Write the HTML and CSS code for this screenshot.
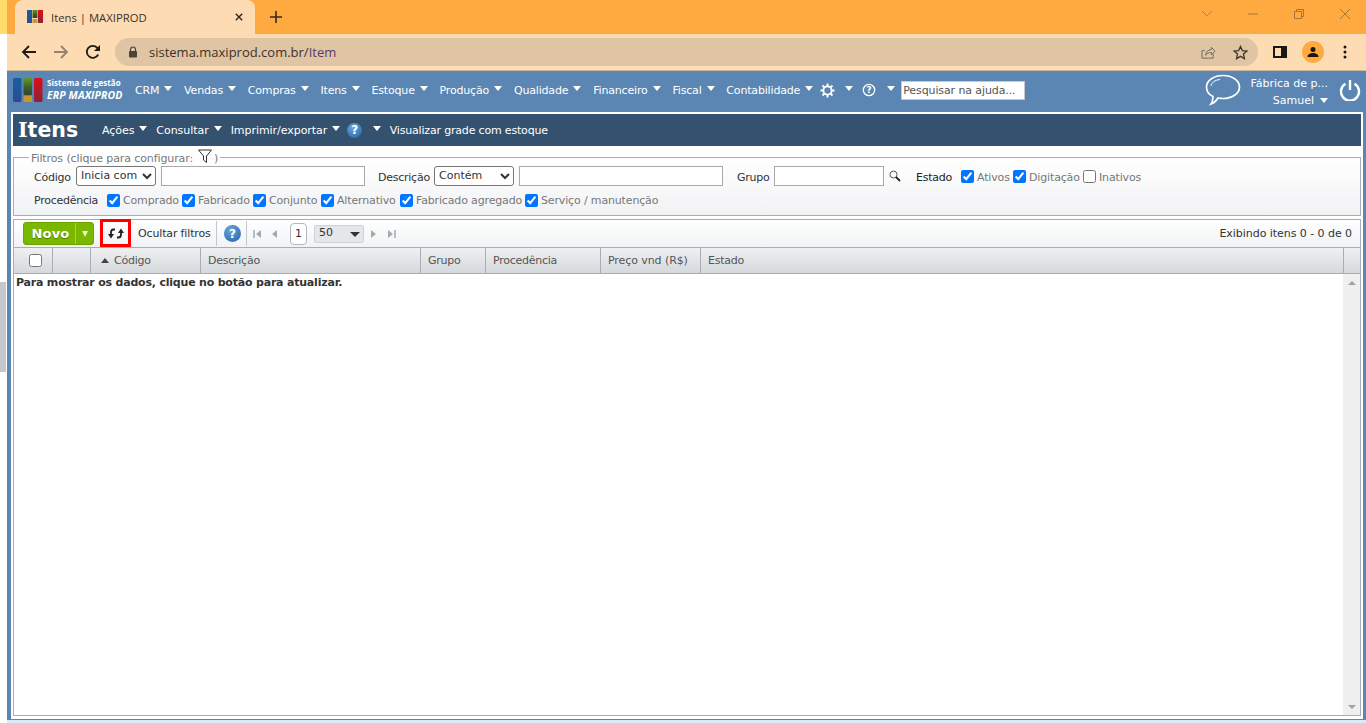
FILE: index.html
```html
<!DOCTYPE html>
<html lang="pt-BR">
<head>
<meta charset="utf-8">
<title>Itens | MAXIPROD</title>
<link rel="stylesheet" href="styles.css">
</head>
<body>
<svg class="defs" width="0" height="0" aria-hidden="true">
  <defs>
    <linearGradient id="gb" x1="0" y1="0" x2="0" y2="1"><stop offset="0" stop-color="#17609a"/><stop offset="1" stop-color="#2c4a98"/></linearGradient>
    <linearGradient id="gg" x1="0" y1="0" x2="0" y2="1"><stop offset="0" stop-color="#5f9a22"/><stop offset=".6" stop-color="#3c5a2a"/><stop offset="1" stop-color="#2f4a2c"/></linearGradient>
    <linearGradient id="gr" x1="0" y1="0" x2="0" y2="1"><stop offset="0" stop-color="#e00d16"/><stop offset="1" stop-color="#8a2438"/></linearGradient>
  </defs>
</svg>
<div class="desk">
  <aside class="gutter"><div class="gutter-top"></div><div class="gutter-bar"></div></aside>
  <div class="browser">
    <div class="tabstrip">
      <div class="tab">
        <svg class="favicon" viewBox="0 0 16 16"><rect x="0" y="1" width="5" height="13" fill="url(#gb)"/><rect x="5.500" y="1" width="5" height="8" fill="url(#gg)"/><rect x="5.500" y="10" width="5" height="4" fill="#c49a3a"/><rect x="11" y="1" width="5" height="13" fill="url(#gr)"/></svg>
        <span class="tab-title">Itens | MAXIPROD</span>
        <svg class="tab-close" viewBox="0 0 10 10"><path d="M1 1l8 8M9 1l-8 8" stroke="#2a2520" stroke-width="1.700" fill="none"/></svg>
      </div>
      <svg class="newtab" viewBox="0 0 12 12"><path d="M6 0v12M0 6h12" stroke="#33291d" stroke-width="1.600"/></svg>
      <div class="winctl">
        <svg class="wc wc-chev" viewBox="0 0 12 8"><path d="M1 1l5 5 5-5" stroke="#b9803c" fill="none"/></svg>
        <svg class="wc wc-min" viewBox="0 0 12 8"><path d="M1 4h10" stroke="#a87438"/></svg>
        <svg class="wc wc-max" viewBox="0 0 12 12"><path d="M1.500 3.500h7v7h-7zM3.500 3.500v-2h7v7h-2" stroke="#a87438" fill="none"/></svg>
        <svg class="wc wc-x" viewBox="0 0 12 12"><path d="M1 1l10 10M11 1L1 11" stroke="#a87438" fill="none"/></svg>
      </div>
    </div>
    <div class="toolbar">
      <svg class="nav nav-back" viewBox="0 0 16 16"><path d="M15 8H2M8 2L2 8l6 6" stroke="#1f1a14" stroke-width="1.800" fill="none"/></svg>
      <svg class="nav nav-fwd" viewBox="0 0 16 16"><path d="M1 8h13M8 2l6 6-6 6" stroke="#94836e" stroke-width="1.800" fill="none"/></svg>
      <svg class="nav nav-reload" viewBox="0 0 16 16"><path d="M13.200 10.500A6 6 0 1 1 12.300 3.800L14 5.500" stroke="#1f1a14" stroke-width="1.800" fill="none"/><path d="M15 1v6H9z" fill="#1f1a14"/></svg>
      <div class="omnibox">
        <svg class="lock" viewBox="0 0 10 12"><path d="M2.500 5V3.500a2.500 2.500 0 0 1 5 0V5" stroke="#4b443b" stroke-width="1.200" fill="none"/><rect x="1" y="5" width="8" height="6.500" rx="1" fill="#4b443b"/></svg>
        <span class="url">sistema.maxiprod.com.br/<span class="url-path">Item</span></span>
        <svg class="omni-share" viewBox="0 0 16 16"><path d="M13 9v5H1V6h3" stroke="#6f675c" fill="none"/><path d="M5 11c0-4 3-6 6-6V2.500l4 4-4 4V8c-3 0-5 1-6 3z" stroke="#6f675c" fill="none"/></svg>
        <svg class="omni-star" viewBox="0 0 16 16"><path d="M8 1.500l2 4.500 4.800.5-3.600 3.200 1 4.800L8 12.100l-4.200 2.400 1-4.800L1.200 6.500 6 6z" stroke="#3d372e" stroke-width="1.400" fill="none"/></svg>
      </div>
      <svg class="side" viewBox="0 0 14 12"><path d="M0 0h14v12H0z" fill="#1c1712"/><rect x="2" y="2" width="6" height="8" fill="#fddcb3"/></svg>
      <div class="avatar"><svg viewBox="0 0 12 12"><circle cx="6" cy="3.500" r="2.500" fill="#1c1712"/><path d="M0.500 11c0-3 3-4 5.500-4s5.500 1 5.500 4z" fill="#1c1712"/></svg></div>
      <svg class="dots" viewBox="0 0 4 14"><circle cx="2" cy="2" r="1.500" fill="#1c1712"/><circle cx="2" cy="7" r="1.500" fill="#1c1712"/><circle cx="2" cy="12" r="1.500" fill="#1c1712"/></svg>
    </div>
    <div class="app">
      <header class="appbar">
        <svg class="logo" viewBox="0 0 30 24"><rect x="0" y="0" width="8.500" height="24" rx="1.500" fill="url(#gb)"/><rect x="10.500" y="0" width="8.500" height="17" rx="1.500" fill="url(#gg)"/><rect x="10.500" y="18" width="8.500" height="6" rx="1" fill="#c8962f"/><rect x="21" y="0" width="8.500" height="24" rx="1.500" fill="url(#gr)"/></svg>
        <div class="brand"><span class="brand-top">Sistema de gestão</span><span class="brand-name">ERP MAXIPROD</span></div>
        <nav class="menu">
          <a class="mi">CRM<i class="caret"></i></a>
          <a class="mi">Vendas<i class="caret"></i></a>
          <a class="mi">Compras<i class="caret"></i></a>
          <a class="mi">Itens<i class="caret"></i></a>
          <a class="mi">Estoque<i class="caret"></i></a>
          <a class="mi">Produção<i class="caret"></i></a>
          <a class="mi">Qualidade<i class="caret"></i></a>
          <a class="mi">Financeiro<i class="caret"></i></a>
          <a class="mi">Fiscal<i class="caret"></i></a>
          <a class="mi">Contabilidade<i class="caret"></i></a>
        </nav>
        <svg class="gear" viewBox="0 0 16 16"><circle cx="8" cy="8" r="4.400" stroke="#fff" stroke-width="2" fill="none"/><path d="M8 0.500v3M8 12.500v3M0.500 8h3M12.500 8h3M2.700 2.700l2.200 2.200M11.100 11.100l2.200 2.200M13.300 2.700l-2.200 2.200M4.900 11.100l-2.200 2.200" stroke="#fff" stroke-width="2"/></svg>
        <i class="caret caret-gear"></i>
        <svg class="help-w" viewBox="0 0 16 16"><circle cx="8" cy="8" r="6.500" stroke="#fff" stroke-width="1.500" fill="none"/><text x="8" y="11.500" class="help-w-q">?</text></svg>
        <i class="caret caret-help"></i>
        <input class="helpsearch" type="text" placeholder="Pesquisar na ajuda...">
        <svg class="bubble" viewBox="0 0 36 32"><path d="M18 1.500c9 0 16.500 4.800 16.500 11.500S27 24.500 18 24.500c-2 0-3.500-.2-5-.5-1.500 2.500-4 5-7 6 1.500-2 2-4.500 2-7.500C3.500 20.500 1.500 17 1.500 13 1.500 6.300 9 1.500 18 1.500z" stroke="#fff" stroke-width="1.700" fill="none"/><path d="M6 12c.5-3.500 4-6 9-6.500" stroke="#fff" fill="none"/></svg>
        <div class="company"><span class="company-name">Fábrica de p...</span><span class="company-user">Samuel<i class="caret caret-user"></i></span></div>
        <svg class="power" viewBox="0 0 22 22"><path d="M6.500 4.800a9 9 0 1 0 9 0" stroke="#fff" stroke-width="2.400" fill="none"/><path d="M11 1v10" stroke="#fff" stroke-width="2.400"/></svg>
      </header>
      <main class="panel">
        <div class="titlebar">
          <h1 class="title">Itens</h1>
          <a class="ti">Ações<i class="caret"></i></a>
          <a class="ti">Consultar<i class="caret"></i></a>
          <a class="ti">Imprimir/exportar<i class="caret"></i></a>
          <span class="help-b help-title">?</span>
          <i class="caret caret-title"></i>
          <a class="ti ti-grade">Visualizar grade com estoque</a>
        </div>
        <fieldset class="filters">
          <legend class="legend">Filtros (clique para configurar: <svg class="funnel" viewBox="0 0 14 14"><path d="M0.500 1h13L8.500 7v6.500L5.500 11V7z" stroke="#333" fill="none"/></svg> )</legend>
          <div class="frow frow-1">
            <label class="fl fl-cod">Código</label>
            <select class="sel"><option>Inicia com</option></select>
            <input class="txt txt-cod" type="text">
            <label class="fl fl-desc">Descrição</label>
            <select class="sel"><option>Contém</option></select>
            <input class="txt txt-cod" type="text">
            <label class="fl fl-grp">Grupo</label>
            <input class="txt txt-grp" type="text">
            <svg class="lens" viewBox="0 0 12 12"><circle cx="4.500" cy="4.500" r="3.500" stroke="#555" fill="none"/><path d="M7 7l4 4" stroke="#222" stroke-width="1.800"/></svg>
            <label class="fl fl-est">Estado</label>
            <label class="ck ck-ati"><input type="checkbox" checked>Ativos</label>
            <label class="ck ck-dig"><input type="checkbox" checked>Digitação</label>
            <label class="ck"><input type="checkbox">Inativos</label>
          </div>
          <div class="frow frow-2">
            <label class="fl fl-proc">Procedência</label>
            <label class="ck ck-com"><input type="checkbox" checked>Comprado</label>
            <label class="ck ck-fab"><input type="checkbox" checked>Fabricado</label>
            <label class="ck ck-con"><input type="checkbox" checked>Conjunto</label>
            <label class="ck ck-alt"><input type="checkbox" checked>Alternativo</label>
            <label class="ck ck-agr"><input type="checkbox" checked>Fabricado agregado</label>
            <label class="ck"><input type="checkbox" checked>Serviço / manutenção</label>
          </div>
        </fieldset>
        <section class="grid">
          <div class="gridbar">
            <div class="novo"><span class="novo-t">Novo</span><span class="novo-c"><i class="caret-s"></i></span></div>
            <button class="refresh" type="button"><svg viewBox="0 0 16 13"><path d="M7 2.500H5.500C3.800 2.500 3 3.500 3 5.500V8M9 10.500h1.500c1.700 0 2.500-1 2.500-3V5" stroke="#222" stroke-width="1.800" fill="none"/><path d="M0 7h6l-3 4.500zM10 6h6l-3-4.500z" fill="#222"/></svg></button>
            <span class="ocultar">Ocultar filtros</span>
            <span class="help-b help-bar">?</span>
            <div class="pager">
              <svg class="pg pg-first" viewBox="0 0 8 10"><path d="M1 1v8" stroke="#a3a9b1" stroke-width="1.500"/><path d="M8 1v8L3 5z" fill="#a3a9b1"/></svg>
              <svg class="pg pg-prev" viewBox="0 0 6 10"><path d="M6 1v8L1 5z" fill="#a3a9b1"/></svg>
              <span class="pgnum">1</span>
              <span class="pgsize">50<i class="caret-d"></i></span>
              <svg class="pg pg-next" viewBox="0 0 6 10"><path d="M0 1v8l5-4z" fill="#a3a9b1"/></svg>
              <svg class="pg pg-last" viewBox="0 0 8 10"><path d="M0 1v8l5-4z" fill="#a3a9b1"/><path d="M7 1v8" stroke="#a3a9b1" stroke-width="1.500"/></svg>
            </div>
            <span class="exibindo">Exibindo itens 0 - 0 de 0</span>
          </div>
          <div class="ghead">
            <div class="gh gh-ck"><input type="checkbox"></div>
            <div class="gh gh-blank"></div>
            <div class="gh gh-cod"><i class="sort"></i>Código</div>
            <div class="gh gh-des">Descrição</div>
            <div class="gh gh-grp">Grupo</div>
            <div class="gh gh-pro">Procedência</div>
            <div class="gh gh-pre">Preço vnd (R$)</div>
            <div class="gh gh-est">Estado</div>
            <div class="gh gh-sb"></div>
          </div>
          <div class="gbody">
            <p class="msg">Para mostrar os dados, clique no botão para atualizar.</p>
            <div class="sbar"><i class="sb-up"></i><i class="sb-down"></i></div>
          </div>
        </section>
      </main>
    </div>
    <div class="strip"></div>
  </div>
</div>
</body>
</html>
```
FILE: styles.css
```css
* { box-sizing: border-box; }
html, body { margin: 0; height: 723px; overflow: hidden; background: #fff; }
body { font-family: "DejaVu Sans", Verdana, sans-serif; font-size: 11px; color: #333; }
.defs { display: block; height: 0; }
.desk { display: flex; height: 723px; }
.gutter { width: 7px; flex: none; display: flex; flex-direction: column; }
.gutter-top { height: 34px; background: #ffdc6a; }
.gutter-bar { width: 6px; height: 90px; margin-top: 248px; background: #c4c8cc; }
.browser { flex: 1; display: flex; flex-direction: column; min-width: 0; }
.strip { height: 3px; background: #dbeafa; flex: none; }

.tabstrip { height: 34px; background: #ffaa40; display: flex; align-items: center; padding-left: 8px; flex: none; }
.tab { width: 240px; height: 34px; background: #fddcb3; border-radius: 8px 8px 0 0; display: flex; align-items: center; padding: 0 12px; }
.favicon { width: 16px; height: 16px; flex: none; margin-right: 8px; }
.tab-title { font: 11.300px "Open Sans", sans-serif; color: #3e3226; flex: 1; }
.tab-close { width: 8px; height: 8px; flex: none; }
.newtab { width: 12px; height: 12px; margin-left: 15px; }
.winctl { margin-left: auto; display: flex; align-items: center; height: 30px; margin-top: -6px; }
.wc { width: 12px; flex: none; }
.wc-chev { height: 8px; margin-right: 34px; }
.wc-min { height: 8px; margin-right: 34px; }
.wc-max { height: 12px; margin-right: 34px; }
.wc-x { height: 12px; margin-right: 15px; }

.toolbar { height: 36px; background: #fddcb3; display: flex; align-items: center; padding-left: 14px; flex: none; }
.nav { width: 16px; height: 16px; flex: none; }
.nav-fwd { margin-left: 16px; }
.nav-reload { margin-left: 16px; }
.omnibox { width: 1143px; height: 28px; margin-left: 14px; background: #dfc5a3; border-radius: 14px; display: flex; align-items: center; padding: 0 10px 0 13px; }
.lock { width: 10px; height: 12px; flex: none; }
.url { font: 13px "Open Sans", sans-serif; color: #3e3226; margin-left: 11px; flex: 1; }
.url-path { color: #5c3a66; }
.omni-share { width: 15px; height: 15px; flex: none; margin-right: 17px; }
.omni-star { width: 15px; height: 15px; flex: none; }
.side { width: 14px; height: 12px; flex: none; margin-left: 15px; }
.avatar { width: 22px; height: 22px; border-radius: 50%; background: #ffaa40; margin-left: 15px; display: flex; align-items: center; justify-content: center; flex: none; }
.avatar svg { width: 12px; height: 12px; }
.dots { width: 4px; height: 14px; margin-left: 19px; flex: none; }

.app { flex: 1; background: #5b86b3; padding: 0 3px 1px 4px; border-top: 1px solid #c9b79c; display: flex; flex-direction: column; min-height: 0; }
.appbar { height: 38px; margin-bottom: 3px; padding: 0 2px; display: flex; align-items: center; color: #fff; flex: none; }
.logo { width: 30px; height: 24px; flex: none; }
.brand { display: flex; flex-direction: column; margin-left: 4px; width: 88px; flex: none; }
.brand-top { font: bold 8px/10px "Open Sans", sans-serif; letter-spacing: .1px; }
.brand-name { font: italic bold 10.500px/14px "Open Sans", sans-serif; letter-spacing: .1px; }
.menu { display: flex; align-items: center; gap: 11.800px; letter-spacing: -.17px; flex: none; }
.mi { color: #fff; display: inline-flex; align-items: center; white-space: nowrap; }
.caret { display: inline-block; width: 0; height: 0; border-left: 4.500px solid transparent; border-right: 4.500px solid transparent; border-top: 5px solid #fff; margin-left: 5px; position: relative; top: -2px; flex: none; }
.gear { width: 15px; height: 15px; margin-left: 7px; flex: none; }
.caret-gear { margin-left: 10px; }
.help-w { width: 14px; height: 14px; margin-left: 9px; flex: none; }
.help-w-q { font: bold 10px "DejaVu Sans", sans-serif; fill: #fff; text-anchor: middle; }
.caret-help { margin-left: 11px; }
.helpsearch { width: 124px; height: 19px; margin-left: 6px; border: 1px solid #c9c9c9; padding: 0 1px; font: 11px "DejaVu Sans", sans-serif; letter-spacing: -.1px; flex: none; background: #fff; }
.helpsearch::placeholder { color: #555; opacity: 1; }
.bubble { width: 36px; height: 32px; margin-left: auto; flex: none; }
.company { display: flex; flex-direction: column; align-items: flex-end; width: 78px; margin: 3px 0 0 9px; flex: none; line-height: 17px; }
.caret-user { margin-left: 6px; top: -1px; }
.power { width: 22px; height: 22px; margin-left: 11px; flex: none; }

.panel { flex: 1; background: #fff; border: solid #fff; border-width: 2px 2px 3px; min-height: 0; display: flex; flex-direction: column; }
.titlebar { height: 32px; background: #34526f; color: #fff; display: flex; align-items: center; padding-left: 5px; flex: none; }
.title { font: bold 20.500px "DejaVu Sans", sans-serif; margin: 0; width: 84px; flex: none; }
.title::first-letter { font-family: "DejaVu Serif", serif; }
.ti { color: #fff; display: inline-flex; align-items: center; white-space: nowrap; margin-right: 9px; letter-spacing: -.05px; }
.ti-grade { margin-right: 0; letter-spacing: -.18px; }
.help-b { display: inline-flex; align-items: center; justify-content: center; border-radius: 50%; background: radial-gradient(circle at 40% 30%, #6ea5dc, #1f5fa8); color: #fff; font: bold 12px "DejaVu Sans", sans-serif; flex: none; }
.help-title { width: 15px; height: 15px; margin-left: -2px; }
.caret-title { margin: 0 8.500px 0 11px; }

.filters { margin: 3px 0 0; padding: 0 0 0 20px; height: 67px; border: 1px solid #a8adb3; background: linear-gradient(#fff, #f1f2f4); min-width: 0; flex: none; color: #333; }
.legend { padding: 0 2px; margin-left: -5px; color: #777; line-height: 13px; letter-spacing: -.1px; }
.funnel { width: 14px; height: 14px; vertical-align: -1px; margin: 0 -2px 0 2px; }
.frow { display: flex; align-items: center; white-space: nowrap; }
.frow-1 { height: 20px; margin-top: 1px; }
.frow-2 { height: 18px; margin-top: 5px; }
.fl { color: #333; flex: none; letter-spacing: -.25px; }
.frow-1 .fl { padding-top: 2px; }
.frow-1 .ck { padding-top: 2px; }
.frow-1 .ck input { position: relative; top: -1px; }
.fl-cod { width: 42px; }
.fl-desc { width: 56px; margin-left: 13px; }
.fl-grp { width: 37px; margin-left: 14px; }
.fl-est { width: 45px; margin-left: 15px; color: #222; }
.fl-proc { width: 73px; }
.sel { width: 80px; height: 20px; font: 11px "DejaVu Sans", sans-serif; color: #333; background: #fff; border: 1px solid #767676; border-radius: 3px; padding: 0 0 1px; flex: none; }
.txt { height: 20px; border: 1px solid #a8a8a8; background: #fff; margin: 0 0 0 5px; padding: 0 2px; flex: none; }
.txt-cod { width: 204px; }
.txt-grp { width: 110px; margin-left: 0; }
.lens { width: 12px; height: 12px; margin-left: 5px; flex: none; }
.ck { display: inline-flex; align-items: center; color: #777; flex: none; letter-spacing: -.15px; }
.ck input { margin: 0 3px 0 0; width: 13px; height: 13px; flex: none; }
.ck-ati { width: 52px; }
.ck-dig { width: 70px; }
.ck-com { width: 75px; }
.ck-fab { width: 71px; }
.ck-con { width: 68px; }
.ck-alt { width: 79px; }
.ck-agr { width: 125px; }

.grid { flex: 1; margin-top: 3px; border: 1px solid #a8adb3; display: flex; flex-direction: column; min-height: 0; }
.gridbar { height: 27px; display: flex; align-items: center; background: linear-gradient(#fff, #f1f2f4); padding-left: 9px; flex: none; }
.novo { width: 71px; height: 23px; background: #7ab800; border: 1px solid #6da500; border-radius: 3px; display: flex; color: #fff; font: bold 13px/21px "DejaVu Sans", sans-serif; flex: none; text-shadow: 0 1px 1px #4f7a00; }
.novo-t { width: 52px; padding-left: 2px; text-align: center; border-right: 1px solid #a4cf5e; letter-spacing: .2px; }
.novo-c { flex: 1; display: flex; align-items: center; justify-content: center; }
.caret-s { width: 0; height: 0; border-left: 3.500px solid transparent; border-right: 3.500px solid transparent; border-top: 6px solid #e9f3c9; }
.refresh { width: 31px; height: 28px; margin: -1px 0 0 6px; border: 3px solid #f00; background: transparent; padding: 0; display: flex; align-items: center; justify-content: center; flex: none; }
.refresh svg { width: 16px; height: 13px; }
.ocultar { margin-left: 7px; color: #333; width: 79px; height: 25px; line-height: 25px; border-right: 1px solid #c4c8cc; flex: none; letter-spacing: -.15px; }
.help-bar { width: 17px; height: 17px; margin-left: 7px; }
.pager { display: flex; align-items: center; height: 25px; margin-left: 5px; padding-left: 6px; border-left: 1px solid #c4c8cc; flex: none; }
.pg { height: 10px; flex: none; }
.pg-first { width: 8px; }
.pg-prev { width: 6px; margin-left: 10px; }
.pgnum { width: 17px; height: 22px; margin-left: 13px; background: #fff; border: 1px solid #b4b8bd; border-radius: 4px; text-align: center; line-height: 20px; color: #333; }
.pgsize { width: 50px; height: 18px; margin-left: 7px; background: #e4e6e9; border: 1px solid #ced1d5; border-radius: 2px; padding-left: 4px; line-height: 14px; display: flex; justify-content: space-between; }
.caret-d { width: 0; height: 0; border-left: 5px solid transparent; border-right: 5px solid transparent; border-top: 5px solid #333; margin: 6px 3px 0 0; }
.pg-next { width: 6px; margin-left: 7px; }
.pg-last { width: 8px; margin-left: 11px; }
.exibindo { margin-left: auto; margin-right: 8px; color: #333; letter-spacing: -.05px; }
.ghead { height: 27px; display: flex; background: linear-gradient(#eef0f1, #d5d8dc); border-top: 1px solid #a8adb3; border-bottom: 1px solid #a8adb3; flex: none; color: #555; letter-spacing: -.25px; }
.gh { display: flex; align-items: center; padding-left: 7px; border-right: 1px solid #a8adb3; flex: none; }
.gh-ck { width: 39px; padding-left: 15px; }
.gh-ck input { margin: 0; width: 13px; height: 13px; }
.gh-blank { width: 38px; }
.gh-cod { width: 110px; padding-left: 10px; }
.gh-des { width: 220px; }
.gh-grp { width: 65px; }
.gh-pro { width: 115px; }
.gh-pre { width: 100px; letter-spacing: -.08px; }
.gh-est { width: 643px; }
.gh-sb { flex: 1; border-right: 0; }
.sort { width: 0; height: 0; border-left: 4.500px solid transparent; border-right: 4.500px solid transparent; border-bottom: 5px solid #444; margin-right: 5px; }
.gbody { flex: 1; display: flex; min-height: 0; background: #fff; }
.msg { margin: 2px 0 0 2px; font-weight: bold; color: #333; flex: 1; line-height: 13px; letter-spacing: -.2px; }
.sbar { width: 17px; background: #f0f0f0; display: flex; flex-direction: column; align-items: center; justify-content: space-between; padding: 7px 0 6px; flex: none; }
.sb-up { width: 0; height: 0; border-left: 4px solid transparent; border-right: 4px solid transparent; border-bottom: 4px solid #a3a0a3; }
.sb-down { width: 0; height: 0; border-left: 4px solid transparent; border-right: 4px solid transparent; border-top: 4px solid #a3a0a3; }
```
